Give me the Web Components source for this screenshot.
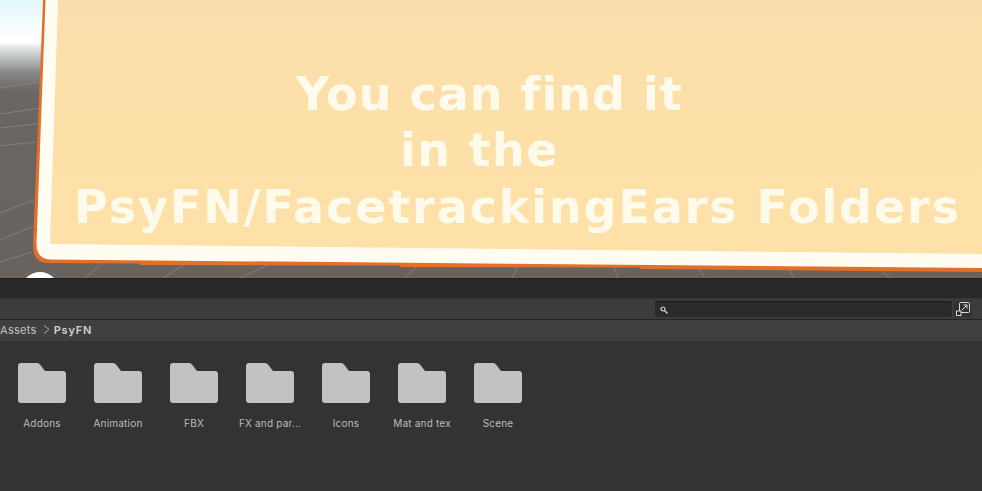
<!DOCTYPE html>
<html>
<head>
<meta charset="utf-8">
<style>
  html, body { margin: 0; padding: 0; background: #333; }
  body { width: 982px; height: 491px; overflow: hidden; display: flex; flex-direction: column; font-family: Inter, "Liberation Sans", sans-serif; }
</style>
</head>
<body>
<scene-view>
  <span>You can find it</span>
  <span>in the</span>
  <span>PsyFN/FacetrackingEars Folders</span>
</scene-view>
<project-toolbar></project-toolbar>
<path-bar root="Assets" current="PsyFN"></path-bar>
<asset-grid>
  <asset-folder name="Addons"></asset-folder>
  <asset-folder name="Animation"></asset-folder>
  <asset-folder name="FBX"></asset-folder>
  <asset-folder name="FX and par..."></asset-folder>
  <asset-folder name="Icons"></asset-folder>
  <asset-folder name="Mat and tex"></asset-folder>
  <asset-folder name="Scene"></asset-folder>
</asset-grid>

<script>
class SceneView extends HTMLElement {
  constructor() {
    super();
    this.shadowDOM = this.attachShadow({mode: 'open'});
    this.shadowDOM.innerHTML = `
      <style>
        :host {
          display: block;
          position: relative;
          height: 278px;
          overflow: hidden;
          flex: none;
        }
        svg { position: absolute; left: 0; top: 0; }
        .sign-text {
          position: absolute;
          left: 0;
          top: 68px;
          width: 982px;
          height: 180px;
          color: #fffbec;
          font-family: "DejaVu Sans", sans-serif;
          font-weight: bold;
          filter: blur(0.7px);
        }
        ::slotted(span) {
          position: absolute;
          white-space: nowrap;
          line-height: 1;
        }
        ::slotted(span:nth-child(1)) { left: 296px; top: 3px; font-size: 46px; letter-spacing: 1px; }
        ::slotted(span:nth-child(2)) { left: 400px; top: 59px; font-size: 46px; letter-spacing: 1.4px; }
        ::slotted(span:nth-child(3)) { left: 74px; top: 116px; font-size: 46px; letter-spacing: 1.9px; }
      </style>
      <svg width="982" height="278" viewBox="0 0 982 278">
        <defs>
          <linearGradient id="sky" x1="0" y1="0" x2="0" y2="1">
            <stop offset="0" stop-color="#e2f6fc"/>
            <stop offset="0.08" stop-color="#f4fcfe"/>
            <stop offset="0.15" stop-color="#ffffff"/>
            <stop offset="0.18" stop-color="#d9dddd"/>
            <stop offset="0.26" stop-color="#87888a"/>
            <stop offset="0.33" stop-color="#6a6663"/>
            <stop offset="1" stop-color="#68635f"/>
          </linearGradient>
          <linearGradient id="paper" x1="0" y1="0" x2="0" y2="1">
            <stop offset="0" stop-color="#f9deac"/>
            <stop offset="0.45" stop-color="#fde0a8"/>
            <stop offset="1" stop-color="#fde1a9"/>
          </linearGradient>
        </defs>
        <rect width="982" height="278" fill="url(#sky)"/>
        <g stroke="#8a8681" stroke-width="1" fill="none" opacity="0.8">
          <path d="M0 114L40 108M0 88L40 82M0 128L38 124M0 146L36 142"/>
          <path d="M0 213L34 200M0 240L34 226M0 262L32 252"/>
          <path d="M240 278L272 263M85 278L100 265M163 278L185 264M404 278L418 265M512 278L518 266M618 278L614 268M705 278L699 268M795 278L788 269M890 278L880 270"/>
        </g>
        <path d="M43 0L33 245Q33 263 48 263L140 263.500L140 265L400 265.500L400 267L640 267.500L640 269L982 272L982 0Z" fill="#e2702a"/>
        <path d="M45.500 0L36.500 243Q36.500 259 50 259.500L982 268L982 0Z" fill="#fffdf1"/>
        <path d="M58 0L50 244L982 254L982 0Z" fill="url(#paper)"/>
        <circle cx="40" cy="291" r="19" fill="#ffffff"/>
      </svg>
      <div class="sign-text"><slot></slot></div>
    `;
  }
}

class ProjectToolbar extends HTMLElement {
  constructor() {
    super();
    this.shadowDOM = this.attachShadow({mode: 'open'});
    this.shadowDOM.innerHTML = `
      <style>
        :host {
          display: block;
          flex: none;
        }
        .tabs {
          height: 20px;
          background: #282828;
          border-top: 1px solid #1f1f1f;
          box-sizing: border-box;
        }
        .tools {
          height: 22px;
          box-sizing: border-box;
          background: #3c3c3c;
          border-top: 1px solid #353535;
          border-bottom: 1px solid #232323;
          display: flex;
          justify-content: flex-end;
          align-items: flex-start;
          gap: 2px;
          padding: 2px 7px 0 0;
        }
        .search {
          width: 297px;
          height: 16px;
          box-sizing: border-box;
          display: flex;
          align-items: center;
          background: #2a2a2a;
          border-top: 1px solid #191919;
          border-radius: 3px;
          padding: 0 0 0 5px;
        }
        .zoom {
          width: 18px;
          height: 16px;
          box-sizing: border-box;
          background: #303030;
          border-right: 1px solid #353535;
          border-radius: 2px;
          display: flex;
          align-items: center;
          justify-content: center;
          margin-right: 3px;
        }
        .zoom svg { display: block; }
      </style>
      <div class="tabs"></div>
      <div class="tools">
        <div class="search">
          <svg width="8" height="8" viewBox="0 0 8 8" fill="none" stroke="#d6d6d6" stroke-width="1.200">
            <circle cx="3" cy="3" r="2"/>
            <path d="M4.500 4.500L7.500 7.500"/>
          </svg>
        </div>
        <div class="zoom">
          <svg width="14" height="14" viewBox="0 0 14 14" fill="none" stroke="#d8d8d8" stroke-width="1">
            <rect x="3.500" y="0.500" width="10" height="10" rx="1"/>
            <rect x="0.500" y="9" width="4.500" height="4.500" fill="#2a2a2a"/>
            <path d="M6 8L11 3M7.500 3H11V6.500"/>
          </svg>
        </div>
      </div>
    `;
  }
}

class PathBar extends HTMLElement {
  constructor() {
    super();
    this.shadowDOM = this.attachShadow({mode: 'open'});
  }
  connectedCallback() {
    this.shadowDOM.innerHTML = `
      <style>
        :host {
          display: flex;
          align-items: center;
          flex: none;
          height: 21px;
          box-sizing: border-box;
          padding-bottom: 2px;
          background: #404040;
          color: #c0c0c0;
          font-size: 11px;
          letter-spacing: 0.3px;
        }
        svg { margin: 0 5px 0 6px; }
        b { font-weight: 600; color: #cfcfcf; letter-spacing: 0.8px; margin-left: -1px; }
      </style>
      <span>${this.getAttribute('root')}</span>
      <svg width="7" height="9" viewBox="0 0 7 9" fill="none" stroke="#a8a8a8" stroke-width="1"><path d="M1 0.500L6 4.500L1 8.500"/></svg>
      <b>${this.getAttribute('current')}</b>
    `;
  }
}

class AssetGrid extends HTMLElement {
  constructor() {
    super();
    this.shadowDOM = this.attachShadow({mode: 'open'});
    this.shadowDOM.innerHTML = `
      <style>
        :host {
          display: flex;
          flex: 1;
          background: #333333;
          padding: 22px 0 0 4px;
          align-items: flex-start;
        }
      </style>
      <slot></slot>
    `;
  }
}

class AssetFolder extends HTMLElement {
  constructor() {
    super();
    this.shadowDOM = this.attachShadow({mode: 'open'});
  }
  connectedCallback() {
    this.shadowDOM.innerHTML = `
      <style>
        :host {
          display: flex;
          flex-direction: column;
          align-items: center;
          width: 76px;
          color: #bcbcbc;
          font-size: 10px;
          letter-spacing: 0.2px;
        }
        svg { display: block; margin-bottom: 14px; }
        span { line-height: 12px; white-space: nowrap; }
      </style>
      <svg width="48" height="40" viewBox="0 0 48 40">
        <path d="M3 0H19Q21 0 22 1.500L27 8H45Q48 8 48 11V37Q48 40 45 40H3Q0 40 0 37V3Q0 0 3 0Z" fill="#c2c2c2"/>
      </svg>
      <span>${this.getAttribute('name')}</span>
    `;
  }
}

customElements.define('scene-view', SceneView);
customElements.define('project-toolbar', ProjectToolbar);
customElements.define('path-bar', PathBar);
customElements.define('asset-grid', AssetGrid);
customElements.define('asset-folder', AssetFolder);
</script>
</body>
</html>
